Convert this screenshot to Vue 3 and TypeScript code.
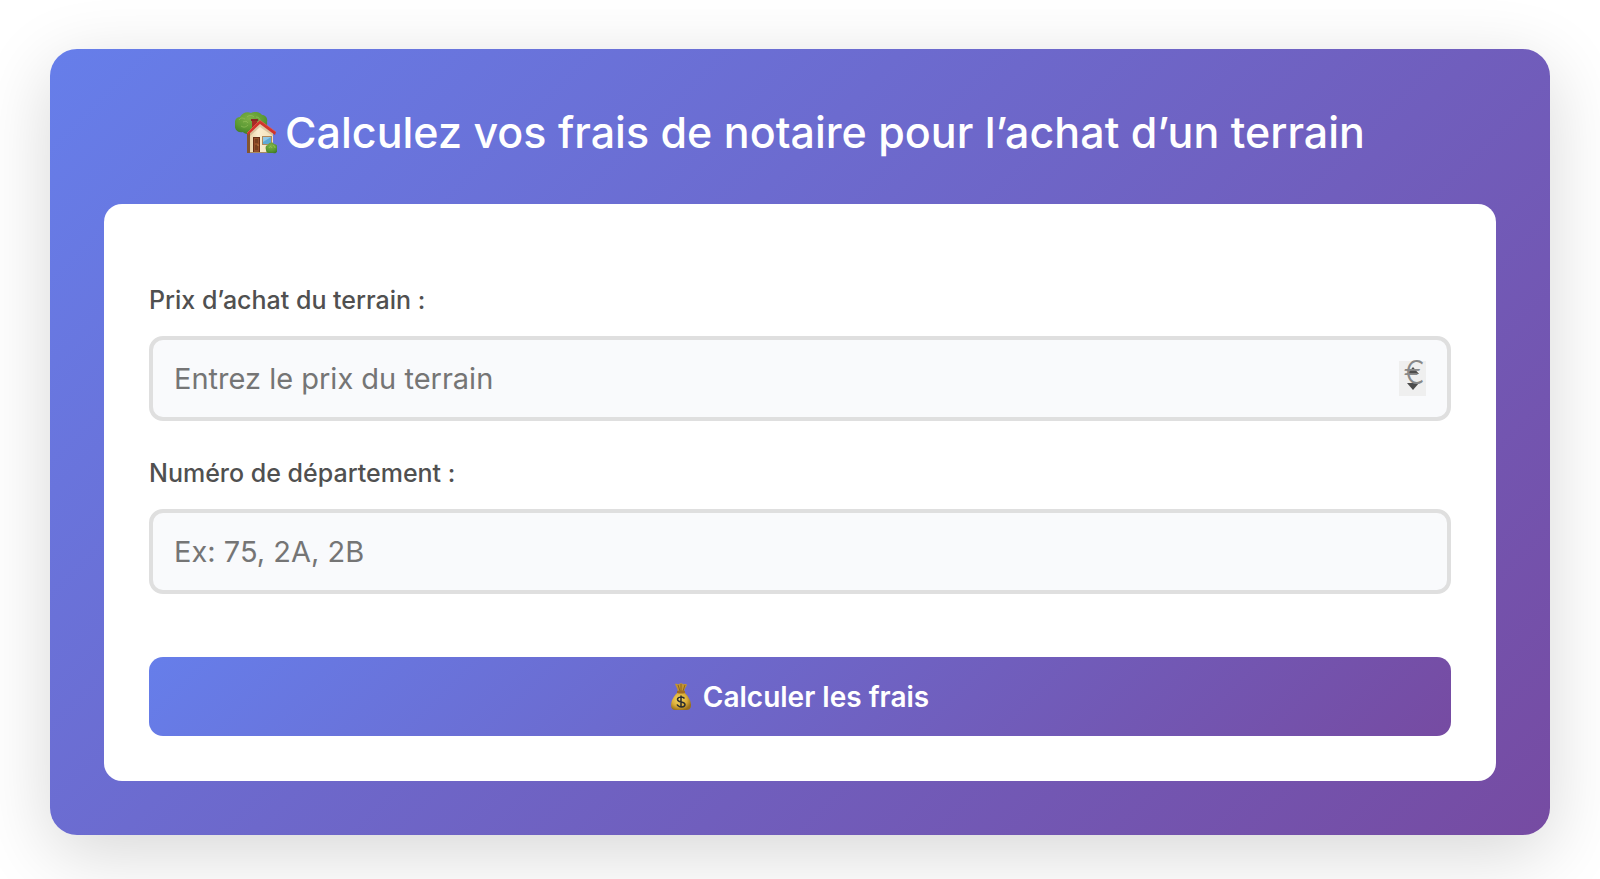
<script setup lang="ts">
import { ref } from 'vue'

const price = ref<string>('')
const department = ref<string>('')

function stepPrice(amount: number): void {
  const current = Number(price.value) || 0
  price.value = String(Math.max(0, current + amount))
}
</script>

<template>
  <main class="page">
    <section class="calculator">
      <h1 class="title">
        <svg class="house" viewBox="0 0 42 42" aria-hidden="true">
          <defs>
            <radialGradient id="leaf" cx="45%" cy="30%" r="75%">
              <stop offset="0" stop-color="#7fb047" />
              <stop offset="0.6" stop-color="#5b9a34" />
              <stop offset="1" stop-color="#3f7a27" />
            </radialGradient>
            <linearGradient id="wall" x1="0" y1="0" x2="1" y2="0">
              <stop offset="0" stop-color="#e9d3aa" />
              <stop offset="0.35" stop-color="#fbeed0" />
              <stop offset="1" stop-color="#f3dfb9" />
            </linearGradient>
          </defs>
          <path d="M9 16l3 5v20h5V16z" fill="#85552e" />
          <path d="M0 12c-1-4 2-7 5-7 2-4 7-6 11-4 4-2 9-1 11 2 4 0 6 4 5 7 1 5-3 8-7 8-2 3-5 3-8 2-3 3-8 2-9 0-5 1-9-2-8-8z" fill="url(#leaf)" />
          <path d="M4 8c2-3 4-2 6-1M12 5c2-2 5-2 7 0M6 14c3 2 5 1 7-1M21 5c3 0 4 2 4 4M8 10c2-1 4-1 5 1" fill="none" stroke="#9bc45f" stroke-width="1" opacity=".6" />
          <path d="M17 8h5v8h-5z" fill="#a52b26" />
          <path d="M16 7h7v2h-7z" fill="#8b2722" />
          <path d="M15 20L25 11l13 9v21H15z" fill="url(#wall)" />
          <path d="M15 21L25 12l13 9v3L25 15 15 24z" fill="#bb9f79" opacity=".45" />
          <path d="M12 21L24 9q1-1 2 0l15 11-1 3-15-11-12 11z" fill="#d0342c" />
          <path d="M12 21L24 9q1-1 2 0l15 11" fill="none" stroke="#ea5d50" stroke-width=".7" />
          <path d="M18 25h7v16h-7z" fill="#663018" />
          <path d="M19 26h5v14h-5z" fill="#954f29" />
          <path d="M20 27h3v4h-3zm0 6h3v5h-3z" fill="#774020" />
          <circle cx="23" cy="33" r=".6" fill="#f0c269" />
          <path d="M27 24h10v9H27z" fill="#b08a5c" />
          <path d="M28 25h8v7h-8z" fill="#5fa9d6" />
          <path d="M28 25h8l-8 5z" fill="#90c8e8" />
          <path d="M15 40h23v1H15z" fill="#a78b62" />
          <path d="M31 38c-1-3 0-5 2-5 1-3 5-3 6-1 3 0 4 3 3 5 1 3-1 5-4 4h-4c-2 0-3-1-3-3z" fill="url(#leaf)" />
          <path d="M34 36c1-2 2-2 3 0m1-2c1-1 2 0 2 2" fill="none" stroke="#9ccb56" stroke-width=".8" />
        </svg>
        <span>Calculez vos frais de notaire pour l’achat d’un terrain</span>
      </h1>

      <form class="form" @submit.prevent>
        <div class="field">
          <label for="price">Prix d’achat du terrain :</label>
          <div class="control">
            <input id="price" v-model="price" type="number" min="0" placeholder="Entrez le prix du terrain" />
            <div class="spinner">
              <button type="button" class="step" aria-label="Augmenter le prix" @click="stepPrice(1000)">
                <svg viewBox="0 0 12 7" aria-hidden="true"><path d="M6 0l6 7H0z" /></svg>
              </button>
              <button type="button" class="step" aria-label="Diminuer le prix" @click="stepPrice(-1000)">
                <svg viewBox="0 0 12 7" aria-hidden="true"><path d="M0 0h12L6 7z" /></svg>
              </button>
            </div>
            <span class="currency">€</span>
          </div>
        </div>

        <div class="field">
          <label for="department">Numéro de département :</label>
          <div class="control">
            <input id="department" v-model="department" type="text" placeholder="Ex: 75, 2A, 2B" />
          </div>
        </div>

        <button type="submit" class="submit">
          <svg class="bag" viewBox="0 0 20 28" aria-hidden="true">
            <defs>
              <radialGradient id="gold" cx="42%" cy="42%" r="62%">
                <stop offset="0" stop-color="#f7d968" />
                <stop offset="0.6" stop-color="#dcae37" />
                <stop offset="1" stop-color="#99701b" />
              </radialGradient>
            </defs>
            <path d="M4 1c2-1 3 1 4 0s3-1 4 0 3-1 4 1c-1 2-3 4-3 7H7C7 6 5 4 4 1z" fill="#c39331" />
            <path d="M7 2l2 6M10 1v7M14 2l-2 6" stroke="#805817" stroke-width=".8" fill="none" />
            <path d="M7 9h6c3 3 7 8 7 13 0 4-2 5-5 5H5c-3 0-5-1-5-5C0 17 4 12 7 9z" fill="url(#gold)" />
            <path d="M6 8q4-1 8 0v2q-4 1-8 0z" fill="#a06b24" />
            <path d="M13.500 15.500C12 13.500 6.500 13.500 6.500 16.500c0 3.500 7.500 1.500 7.500 5 0 3-6 3.500-8 0M10 12.500v12" fill="none" stroke="#292c2f" stroke-width="1.500" />
          </svg>
          <span>Calculer les frais</span>
        </button>
      </form>
    </section>
  </main>
</template>

<style>
body {
  margin: 0;
  background: #fff;
}
</style>

<style scoped>
.page {
  box-sizing: border-box;
  padding: 49px 50px 44px;
  overflow: hidden;
  font-family: Inter, "Liberation Sans", sans-serif;
}

.calculator {
  padding: 54px;
  border-radius: 27px;
  background: linear-gradient(135deg, #667eea 0%, #764ba2 100%);
  box-shadow: 0 18px 72px rgba(0, 0, 0, 0.16);
}

.title {
  display: flex;
  align-items: center;
  justify-content: center;
  gap: 8px;
  margin: 0;
  padding-bottom: 42px;
  color: #fff;
  font-size: 43px;
  font-weight: 500;
  line-height: 59px;
}

.house {
  flex: none;
  width: 42px;
  height: 42px;
}

.form {
  padding: 80px 45px 45px;
  border-radius: 18px;
  background: #fff;
}

.field {
  margin-bottom: 36px;
}

label {
  display: block;
  margin-bottom: 20px;
  color: #505050;
  font-size: 25px;
  font-weight: 500;
  line-height: 32px;
}

.control {
  position: relative;
}

input {
  box-sizing: border-box;
  display: block;
  width: 100%;
  height: 85px;
  padding: 0 21px;
  border: 4px solid #dfdfdf;
  border-radius: 14px;
  outline: none;
  background: #f9fafc;
  color: #333;
  font-family: inherit;
  font-size: 29px;
}

input:focus {
  border-color: #667eea;
}

input::placeholder {
  color: #757575;
  opacity: 1;
}

input[type="number"] {
  appearance: textfield;
}

input[type="number"]::-webkit-inner-spin-button {
  appearance: none;
  margin: 0;
}

.spinner {
  position: absolute;
  top: 25px;
  right: 25px;
  display: flex;
  flex-direction: column;
  justify-content: center;
  gap: 9px;
  width: 27px;
  height: 35px;
  background: #efefef;
}

.step {
  display: flex;
  justify-content: center;
  padding: 0;
  border: 0;
  background: transparent;
  cursor: pointer;
}

.step svg {
  width: 12px;
  height: 7px;
  fill: #4c4c4c;
}

.currency {
  position: absolute;
  top: 21px;
  right: 26px;
  color: #888;
  font-size: 32px;
  font-weight: 300;
  line-height: 32px;
  pointer-events: none;
}

.submit {
  display: flex;
  align-items: center;
  justify-content: center;
  gap: 12px;
  width: 100%;
  height: 79px;
  margin-top: 63px;
  padding: 0;
  border: 0;
  border-radius: 14px;
  background: linear-gradient(135deg, #667eea 0%, #764ba2 100%);
  color: #fff;
  font-family: inherit;
  font-size: 28px;
  font-weight: 600;
  cursor: pointer;
}

.bag {
  width: 20px;
  height: 28px;
}
</style>
